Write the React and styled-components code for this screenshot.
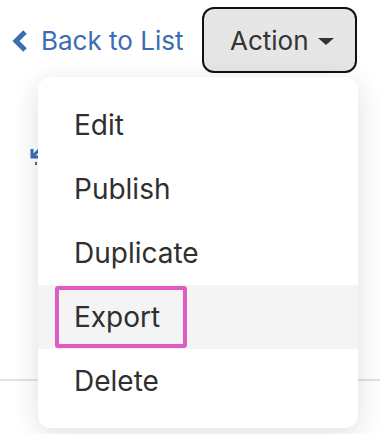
import React from "react";
import styled, { createGlobalStyle } from "styled-components";

const GlobalStyle = createGlobalStyle`
  html, body {
    margin: 0;
    padding: 0;
    background: #ffffff;
    font-family: Inter, "Open Sans", sans-serif;
  }
`;

const items = ["Edit", "Publish", "Duplicate", "Export", "Delete"];

export default function App() {
  return (
    <Page>
      <GlobalStyle />
      <Header>
        <BackLink href="#">
          <svg width="16" height="22" viewBox="0 0 16 22">
            <polyline
              points="13,2 4,11 13,20"
              fill="none"
              stroke="#3a6db3"
              strokeWidth="5"
              strokeLinejoin="miter"
            />
          </svg>
          Back to List
        </BackLink>
        <ActionWrap>
          <ActionButton>
            Action
            <Caret />
          </ActionButton>
          <Menu>
            {items.map((label) => (
              <MenuItem key={label} active={label === "Export"}>
                {label === "Export" ? <Marked>{label}</Marked> : label}
              </MenuItem>
            ))}
          </Menu>
        </ActionWrap>
      </Header>
      <Content>
        <ShareIcon>
          <svg width="20" height="20" viewBox="0 0 20 20">
            <polyline points="2,3 2,11 10,11" fill="none" stroke="#3a6db3" strokeWidth="3" />
            <line x1="2" y1="11" x2="11" y2="2" stroke="#3a6db3" strokeWidth="3" />
            <line x1="6" y1="16" x2="6" y2="19" stroke="#3a6db3" strokeWidth="2" />
          </svg>
        </ShareIcon>
        <Divider />
      </Content>
    </Page>
  );
}

const Page = styled.div`
  width: 380px;
  height: 434px;
  overflow: hidden;
  position: relative;
`;

const Header = styled.div`
  display: flex;
  align-items: flex-start;
  justify-content: space-between;
  padding: 7px 23px 0 12px;
`;

const BackLink = styled.a`
  display: flex;
  align-items: center;
  gap: 13px;
  margin-top: 21px;
  color: #3a6db3;
  font-size: 26px;
  line-height: 26px;
  text-decoration: none;
`;

const ActionWrap = styled.div`
  position: relative;
`;

const ActionButton = styled.button`
  display: flex;
  align-items: center;
  gap: 9px;
  box-sizing: border-box;
  width: 155px;
  height: 66px;
  padding: 0 0 0 26px;
  border: 2px solid #111;
  border-radius: 12px;
  background: #e6e6e6;
  color: #333;
  font-family: Inter, "Open Sans", sans-serif;
  font-size: 26px;
`;

const Caret = styled.span`
  width: 0;
  height: 0;
  border-left: 8px solid transparent;
  border-right: 8px solid transparent;
  border-top: 7px solid #333;
  margin-top: 3px;
`;

const Menu = styled.div`
  position: absolute;
  top: 70px;
  right: -1px;
  width: 320px;
  box-sizing: border-box;
  padding: 16px 0 15px;
  background: #fff;
  border-radius: 13px;
  box-shadow: 0 6px 28px rgba(0, 0, 0, 0.13);
  z-index: 2;
`;

const MenuItem = styled.div`
  display: flex;
  align-items: center;
  height: 64px;
  padding-left: 36px;
  font-size: 28px;
  color: #2f2f2f;
  background: ${(p) => (p.active ? "#f4f4f4" : "transparent")};
`;

const Marked = styled.span`
  display: inline-flex;
  align-items: center;
  box-sizing: border-box;
  height: 62px;
  margin-left: -19px;
  padding: 0 23px 0 15px;
  border: 4px solid #e05cc0;
  border-radius: 3px;
`;

const Content = styled.div`
  padding: 73px 0 0 30px;
`;

const ShareIcon = styled.div`
  width: 20px;
  height: 20px;
`;

const Divider = styled.div`
  margin: 213px 0 0 -30px;
  height: 2px;
  background: #e2e2e2;
`;
